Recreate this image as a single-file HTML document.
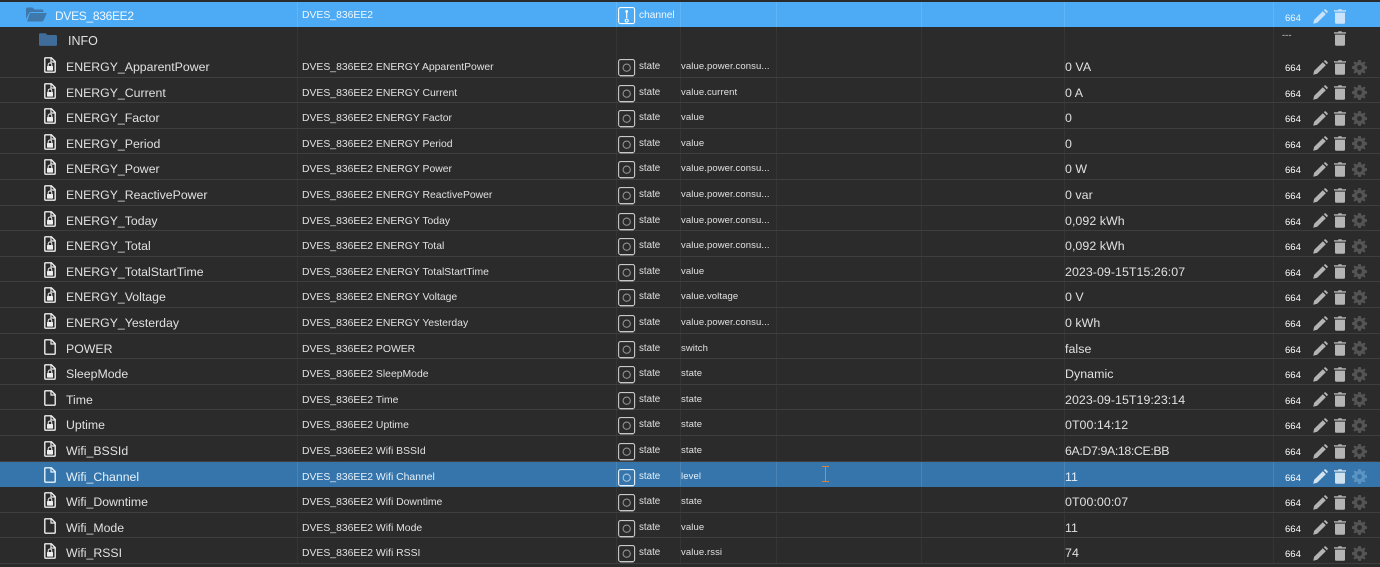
<!DOCTYPE html>
<html><head><meta charset="utf-8"><style>
html,body{margin:0;padding:0;background:#2b2b2b}
#w{position:relative;width:1380px;height:567px;overflow:hidden;background:#2b2b2b;font-family:"Liberation Sans",sans-serif;color:#e0e0e0}
.r{position:absolute;left:0;width:1380px;height:25.6px;box-sizing:border-box;border-bottom:1px solid #3e3e3e;background:#2b2b2b}
.r span{position:absolute;top:2px;line-height:26px;white-space:nowrap}
.r .c{top:3px}
.r.top span,.r.i span{top:1px}
.n{left:66px;font-size:12.3px}
.c{left:302px;font-size:10.4px}
.t{left:639px;font-size:9.8px}
.o{left:681px;font-size:9.5px;letter-spacing:.1px}
.v{left:1065px;font-size:12.4px;letter-spacing:.05px}
.p{left:1285px;font-size:9.5px;top:4px!important;color:#fff}
.l{position:absolute;top:0;bottom:0;width:1px;background:#353535}
.a{left:297px}.b{left:616px}.d{left:680px}.e{left:776px}.f{left:921px}.g{left:1064px}.h{left:1273px}
svg{position:absolute;overflow:visible}
.fi{left:44px;top:5px;width:12px;height:16px;color:#eee}
.ty{left:618px;top:7px;width:18px;height:18px;color:#c8c8c8}
.pe{left:1313px;top:7.5px;width:15px;height:15px;color:#b4b4b4}
.tr{left:1334px;top:7.5px;width:12px;height:15px;color:#b4b4b4}
.ge{left:1352px;top:7.5px;width:15px;height:15px;color:#545454}
.s{background:#3575ab;border-bottom-color:#3575ab}
.s .l{background:#4a84b5}
.s .fi,.s .ty{color:#e8f3fb}.s .pe{color:#d3e3f0}.s .tr{color:#cfe0ee}.s .ge{color:#5b93c2}
.s .n,.s .c,.s .t,.s .o,.s .v{color:#e6f0f8}
.top{background:#4dabf5;top:2px;height:25px;border:0;color:#f2f9ff}
.top .l{background:#63b4f4}
.top span{color:#f0f8ff}
.top .pe,.top .tr{color:#c9e4fa;top:7px}
</style></head><body><div id="w">
<svg width="0" height="0" style="position:absolute"><defs>
<symbol id="lk" viewBox="0 0 12 16"><path d="M1.2 .8H7.4L11.2 4.6V14.2Q11.2 15.2 10.2 15.2H1.8Q.8 15.2 .8 14.2V1.2Z" fill="none" stroke="currentColor" stroke-width="1.4"/><path d="M7 1V5H11" fill="none" stroke="currentColor" stroke-width="1.2"/><rect x="3" y="9" width="6" height="4.6" rx=".6" fill="currentColor"/><path d="M4.2 9V7.8a1.8 1.8 0 0 1 3.6 0V9" fill="none" stroke="currentColor" stroke-width="1"/></symbol>
<symbol id="fl" viewBox="0 0 12 16"><path d="M1.2 .8H7.4L11.2 4.6V14.2Q11.2 15.2 10.2 15.2H1.8Q.8 15.2 .8 14.2V1.2Z" fill="none" stroke="currentColor" stroke-width="1.4"/><path d="M7 1V5H11" fill="none" stroke="currentColor" stroke-width="1.2"/></symbol>
<symbol id="st" viewBox="0 0 18 18"><rect x=".6" y=".6" width="16" height="16" rx="2" fill="none" stroke="currentColor" stroke-width="1.1"/><path d="M2 17.2H15.5" stroke="currentColor" stroke-opacity=".5"/><circle cx="8.7" cy="8.7" r="3.6" fill="none" stroke="currentColor" stroke-opacity=".65" stroke-width="1.1"/></symbol>
<symbol id="ch" viewBox="0 0 18 18"><rect x=".6" y=".6" width="16" height="16" rx="2" fill="none" stroke="currentColor" stroke-width="1.1"/><path d="M8.7 3V11" stroke="currentColor" stroke-width="1.2"/><circle cx="8.7" cy="4.4" r="1.4" fill="currentColor"/><circle cx="8.7" cy="13.6" r="1.5" fill="none" stroke="currentColor"/></symbol>
<symbol id="pe" viewBox="0 0 15 15"><path d="M.2 14.8L1.2 10.8 9.8 2.2 12.8 5.2 4.2 13.8Z" fill="currentColor"/><path d="M10.8 1.2L11.6.4Q12.1 0 12.7.4L14.6 2.3Q15 2.9 14.6 3.4L13.8 4.2Z" fill="currentColor"/></symbol>
<symbol id="tr" viewBox="0 0 12 15"><path d="M0 1.2H4L4.5.2H7.5L8 1.2H12V2.6H0Z" fill="currentColor"/><path d="M1 3.6H11V13.4Q11 14.8 9.6 14.8H2.4Q1 14.8 1 13.4Z" fill="currentColor"/></symbol>
<symbol id="ge" viewBox="0 0 16 16"><path fill-rule="evenodd" fill="currentColor" d="M6.6 0H9.4L9.8 2.2 11.3 2.8 13.2 1.6 14.4 2.8 13.2 4.7 13.8 6.2 16 6.6V9.4L13.8 9.8 13.2 11.3 14.4 13.2 13.2 14.4 11.3 13.2 9.8 13.8 9.4 16H6.6L6.2 13.8 4.7 13.2 2.8 14.4 1.6 13.2 2.8 11.3 2.2 9.8 0 9.4V6.6L2.2 6.2 2.8 4.7 1.6 2.8 2.8 1.6 4.7 2.8 6.2 2.2ZM8 5.4A2.6 2.6 0 1 0 8 10.6 2.6 2.6 0 1 0 8 5.4Z"/></symbol>
</defs></svg>

<div class="r top"><i class="l a"></i><i class="l b"></i><i class="l d"></i><i class="l e"></i><i class="l f"></i><i class="l g"></i><i class="l h"></i>
<svg style="left:26px;top:5px" width="21" height="15" viewBox="0 0 21 15"><path d="M0 2Q0 .5 1.5.5H6.5L8.5 2.5H16Q17.5 2.5 17.5 4V5H5Q3.6 5 3 6.2L0 12Z" fill="#3f78ab"/><path d="M4 6H20Q21 6 20.5 7L17.5 13.5Q17 14.5 16 14.5H1Z" fill="#3f78ab"/></svg>
<span class="n" style="left:55px;font-size:12px;letter-spacing:-.3px">DVES_836EE2</span><span class="c">DVES_836EE2</span><svg class="ty" style="top:5px;color:#fff"><use href="#ch"/></svg><span class="t" style="font-size:10.2px">channel</span><span class="p">664</span><svg class="pe"><use href="#pe"/></svg><svg class="tr"><use href="#tr"/></svg></div>

<div class="r i" style="top:27px;height:25.6px"><i class="l a"></i><i class="l b"></i><i class="l d"></i><i class="l e"></i><i class="l f"></i><i class="l g"></i><i class="l h"></i>
<svg style="left:39px;top:6px" width="18" height="13" viewBox="0 0 18 15" preserveAspectRatio="none"><path d="M0 1.5Q0 .3 1.2.3H6.5L8.5 2.3H16.5Q18 2.3 18 3.8V13.5Q18 14.8 16.5 14.8H1.5Q0 14.8 0 13.5Z" fill="#3f6c98"/></svg>
<span class="n" style="left:68px;font-size:12.5px">INFO</span><span class="p" style="left:1282px;top:-4px!important;color:#ccc">---</span><svg class="tr" style="top:4px"><use href="#tr"/></svg></div>

<div class="r" style="top:52.0px"><i class="l a"></i><i class="l b"></i><i class="l d"></i><i class="l e"></i><i class="l f"></i><i class="l g"></i><i class="l h"></i><svg class="fi"><use href="#lk"/></svg><span class="n">ENERGY_ApparentPower</span><span class="c">DVES_836EE2 ENERGY ApparentPower</span><svg class="ty"><use href="#st"/></svg><span class="t">state</span><span class="o">value.power.consu...</span><span class="v">0 VA</span><span class="p">664</span><svg class="pe"><use href="#pe"/></svg><svg class="tr"><use href="#tr"/></svg><svg class="ge"><use href="#ge"/></svg></div>
<div class="r" style="top:77.6px"><i class="l a"></i><i class="l b"></i><i class="l d"></i><i class="l e"></i><i class="l f"></i><i class="l g"></i><i class="l h"></i><svg class="fi"><use href="#lk"/></svg><span class="n">ENERGY_Current</span><span class="c">DVES_836EE2 ENERGY Current</span><svg class="ty"><use href="#st"/></svg><span class="t">state</span><span class="o">value.current</span><span class="v">0 A</span><span class="p">664</span><svg class="pe"><use href="#pe"/></svg><svg class="tr"><use href="#tr"/></svg><svg class="ge"><use href="#ge"/></svg></div>
<div class="r" style="top:103.2px"><i class="l a"></i><i class="l b"></i><i class="l d"></i><i class="l e"></i><i class="l f"></i><i class="l g"></i><i class="l h"></i><svg class="fi"><use href="#lk"/></svg><span class="n">ENERGY_Factor</span><span class="c">DVES_836EE2 ENERGY Factor</span><svg class="ty"><use href="#st"/></svg><span class="t">state</span><span class="o">value</span><span class="v">0</span><span class="p">664</span><svg class="pe"><use href="#pe"/></svg><svg class="tr"><use href="#tr"/></svg><svg class="ge"><use href="#ge"/></svg></div>
<div class="r" style="top:128.8px"><i class="l a"></i><i class="l b"></i><i class="l d"></i><i class="l e"></i><i class="l f"></i><i class="l g"></i><i class="l h"></i><svg class="fi"><use href="#lk"/></svg><span class="n">ENERGY_Period</span><span class="c">DVES_836EE2 ENERGY Period</span><svg class="ty"><use href="#st"/></svg><span class="t">state</span><span class="o">value</span><span class="v">0</span><span class="p">664</span><svg class="pe"><use href="#pe"/></svg><svg class="tr"><use href="#tr"/></svg><svg class="ge"><use href="#ge"/></svg></div>
<div class="r" style="top:154.4px"><i class="l a"></i><i class="l b"></i><i class="l d"></i><i class="l e"></i><i class="l f"></i><i class="l g"></i><i class="l h"></i><svg class="fi"><use href="#lk"/></svg><span class="n">ENERGY_Power</span><span class="c">DVES_836EE2 ENERGY Power</span><svg class="ty"><use href="#st"/></svg><span class="t">state</span><span class="o">value.power.consu...</span><span class="v">0 W</span><span class="p">664</span><svg class="pe"><use href="#pe"/></svg><svg class="tr"><use href="#tr"/></svg><svg class="ge"><use href="#ge"/></svg></div>
<div class="r" style="top:180.0px"><i class="l a"></i><i class="l b"></i><i class="l d"></i><i class="l e"></i><i class="l f"></i><i class="l g"></i><i class="l h"></i><svg class="fi"><use href="#lk"/></svg><span class="n">ENERGY_ReactivePower</span><span class="c">DVES_836EE2 ENERGY ReactivePower</span><svg class="ty"><use href="#st"/></svg><span class="t">state</span><span class="o">value.power.consu...</span><span class="v">0 var</span><span class="p">664</span><svg class="pe"><use href="#pe"/></svg><svg class="tr"><use href="#tr"/></svg><svg class="ge"><use href="#ge"/></svg></div>
<div class="r" style="top:205.6px"><i class="l a"></i><i class="l b"></i><i class="l d"></i><i class="l e"></i><i class="l f"></i><i class="l g"></i><i class="l h"></i><svg class="fi"><use href="#lk"/></svg><span class="n">ENERGY_Today</span><span class="c">DVES_836EE2 ENERGY Today</span><svg class="ty"><use href="#st"/></svg><span class="t">state</span><span class="o">value.power.consu...</span><span class="v">0,092 kWh</span><span class="p">664</span><svg class="pe"><use href="#pe"/></svg><svg class="tr"><use href="#tr"/></svg><svg class="ge"><use href="#ge"/></svg></div>
<div class="r" style="top:231.2px"><i class="l a"></i><i class="l b"></i><i class="l d"></i><i class="l e"></i><i class="l f"></i><i class="l g"></i><i class="l h"></i><svg class="fi"><use href="#lk"/></svg><span class="n">ENERGY_Total</span><span class="c">DVES_836EE2 ENERGY Total</span><svg class="ty"><use href="#st"/></svg><span class="t">state</span><span class="o">value.power.consu...</span><span class="v">0,092 kWh</span><span class="p">664</span><svg class="pe"><use href="#pe"/></svg><svg class="tr"><use href="#tr"/></svg><svg class="ge"><use href="#ge"/></svg></div>
<div class="r" style="top:256.8px"><i class="l a"></i><i class="l b"></i><i class="l d"></i><i class="l e"></i><i class="l f"></i><i class="l g"></i><i class="l h"></i><svg class="fi"><use href="#lk"/></svg><span class="n">ENERGY_TotalStartTime</span><span class="c">DVES_836EE2 ENERGY TotalStartTime</span><svg class="ty"><use href="#st"/></svg><span class="t">state</span><span class="o">value</span><span class="v">2023-09-15T15:26:07</span><span class="p">664</span><svg class="pe"><use href="#pe"/></svg><svg class="tr"><use href="#tr"/></svg><svg class="ge"><use href="#ge"/></svg></div>
<div class="r" style="top:282.4px"><i class="l a"></i><i class="l b"></i><i class="l d"></i><i class="l e"></i><i class="l f"></i><i class="l g"></i><i class="l h"></i><svg class="fi"><use href="#lk"/></svg><span class="n">ENERGY_Voltage</span><span class="c">DVES_836EE2 ENERGY Voltage</span><svg class="ty"><use href="#st"/></svg><span class="t">state</span><span class="o">value.voltage</span><span class="v">0 V</span><span class="p">664</span><svg class="pe"><use href="#pe"/></svg><svg class="tr"><use href="#tr"/></svg><svg class="ge"><use href="#ge"/></svg></div>
<div class="r" style="top:308.0px"><i class="l a"></i><i class="l b"></i><i class="l d"></i><i class="l e"></i><i class="l f"></i><i class="l g"></i><i class="l h"></i><svg class="fi"><use href="#lk"/></svg><span class="n">ENERGY_Yesterday</span><span class="c">DVES_836EE2 ENERGY Yesterday</span><svg class="ty"><use href="#st"/></svg><span class="t">state</span><span class="o">value.power.consu...</span><span class="v">0 kWh</span><span class="p">664</span><svg class="pe"><use href="#pe"/></svg><svg class="tr"><use href="#tr"/></svg><svg class="ge"><use href="#ge"/></svg></div>
<div class="r" style="top:333.6px"><i class="l a"></i><i class="l b"></i><i class="l d"></i><i class="l e"></i><i class="l f"></i><i class="l g"></i><i class="l h"></i><svg class="fi"><use href="#fl"/></svg><span class="n">POWER</span><span class="c">DVES_836EE2 POWER</span><svg class="ty"><use href="#st"/></svg><span class="t">state</span><span class="o">switch</span><span class="v">false</span><span class="p">664</span><svg class="pe"><use href="#pe"/></svg><svg class="tr"><use href="#tr"/></svg><svg class="ge"><use href="#ge"/></svg></div>
<div class="r" style="top:359.2px"><i class="l a"></i><i class="l b"></i><i class="l d"></i><i class="l e"></i><i class="l f"></i><i class="l g"></i><i class="l h"></i><svg class="fi"><use href="#lk"/></svg><span class="n">SleepMode</span><span class="c">DVES_836EE2 SleepMode</span><svg class="ty"><use href="#st"/></svg><span class="t">state</span><span class="o">state</span><span class="v">Dynamic</span><span class="p">664</span><svg class="pe"><use href="#pe"/></svg><svg class="tr"><use href="#tr"/></svg><svg class="ge"><use href="#ge"/></svg></div>
<div class="r" style="top:384.8px"><i class="l a"></i><i class="l b"></i><i class="l d"></i><i class="l e"></i><i class="l f"></i><i class="l g"></i><i class="l h"></i><svg class="fi"><use href="#fl"/></svg><span class="n">Time</span><span class="c">DVES_836EE2 Time</span><svg class="ty"><use href="#st"/></svg><span class="t">state</span><span class="o">state</span><span class="v">2023-09-15T19:23:14</span><span class="p">664</span><svg class="pe"><use href="#pe"/></svg><svg class="tr"><use href="#tr"/></svg><svg class="ge"><use href="#ge"/></svg></div>
<div class="r" style="top:410.4px"><i class="l a"></i><i class="l b"></i><i class="l d"></i><i class="l e"></i><i class="l f"></i><i class="l g"></i><i class="l h"></i><svg class="fi"><use href="#lk"/></svg><span class="n">Uptime</span><span class="c">DVES_836EE2 Uptime</span><svg class="ty"><use href="#st"/></svg><span class="t">state</span><span class="o">state</span><span class="v">0T00:14:12</span><span class="p">664</span><svg class="pe"><use href="#pe"/></svg><svg class="tr"><use href="#tr"/></svg><svg class="ge"><use href="#ge"/></svg></div>
<div class="r" style="top:436.0px"><i class="l a"></i><i class="l b"></i><i class="l d"></i><i class="l e"></i><i class="l f"></i><i class="l g"></i><i class="l h"></i><svg class="fi"><use href="#lk"/></svg><span class="n">Wifi_BSSId</span><span class="c">DVES_836EE2 Wifi BSSId</span><svg class="ty"><use href="#st"/></svg><span class="t">state</span><span class="o">state</span><span class="v" style="letter-spacing:-.4px">6A:D7:9A:18:CE:BB</span><span class="p">664</span><svg class="pe"><use href="#pe"/></svg><svg class="tr"><use href="#tr"/></svg><svg class="ge"><use href="#ge"/></svg></div>
<div class="r s" style="top:461.6px"><i class="l a"></i><i class="l b"></i><i class="l d"></i><i class="l e"></i><i class="l f"></i><i class="l g"></i><i class="l h"></i><svg class="fi"><use href="#fl"/></svg><span class="n">Wifi_Channel</span><span class="c">DVES_836EE2 Wifi Channel</span><svg class="ty"><use href="#st"/></svg><span class="t">state</span><span class="o">level</span><span class="v">11</span><span class="p">664</span><svg class="pe"><use href="#pe"/></svg><svg class="tr"><use href="#tr"/></svg><svg class="ge"><use href="#ge"/></svg>
<svg style="left:822px;top:4.4px" width="7" height="16" viewBox="0 0 7 16"><path d="M0 .5H7M0 15.5H7M3.5 .5V15.5" stroke="#d0843c" fill="none"/></svg></div>
<div class="r" style="top:487.2px"><i class="l a"></i><i class="l b"></i><i class="l d"></i><i class="l e"></i><i class="l f"></i><i class="l g"></i><i class="l h"></i><svg class="fi"><use href="#lk"/></svg><span class="n">Wifi_Downtime</span><span class="c">DVES_836EE2 Wifi Downtime</span><svg class="ty"><use href="#st"/></svg><span class="t">state</span><span class="o">state</span><span class="v">0T00:00:07</span><span class="p">664</span><svg class="pe"><use href="#pe"/></svg><svg class="tr"><use href="#tr"/></svg><svg class="ge"><use href="#ge"/></svg></div>
<div class="r" style="top:512.8px"><i class="l a"></i><i class="l b"></i><i class="l d"></i><i class="l e"></i><i class="l f"></i><i class="l g"></i><i class="l h"></i><svg class="fi"><use href="#fl"/></svg><span class="n">Wifi_Mode</span><span class="c">DVES_836EE2 Wifi Mode</span><svg class="ty"><use href="#st"/></svg><span class="t">state</span><span class="o">value</span><span class="v">11</span><span class="p">664</span><svg class="pe"><use href="#pe"/></svg><svg class="tr"><use href="#tr"/></svg><svg class="ge"><use href="#ge"/></svg></div>
<div class="r" style="top:538.4px"><i class="l a"></i><i class="l b"></i><i class="l d"></i><i class="l e"></i><i class="l f"></i><i class="l g"></i><i class="l h"></i><svg class="fi"><use href="#lk"/></svg><span class="n">Wifi_RSSI</span><span class="c">DVES_836EE2 Wifi RSSI</span><svg class="ty"><use href="#st"/></svg><span class="t">state</span><span class="o">value.rssi</span><span class="v">74</span><span class="p">664</span><svg class="pe"><use href="#pe"/></svg><svg class="tr"><use href="#tr"/></svg><svg class="ge"><use href="#ge"/></svg></div>
</div></body></html>
